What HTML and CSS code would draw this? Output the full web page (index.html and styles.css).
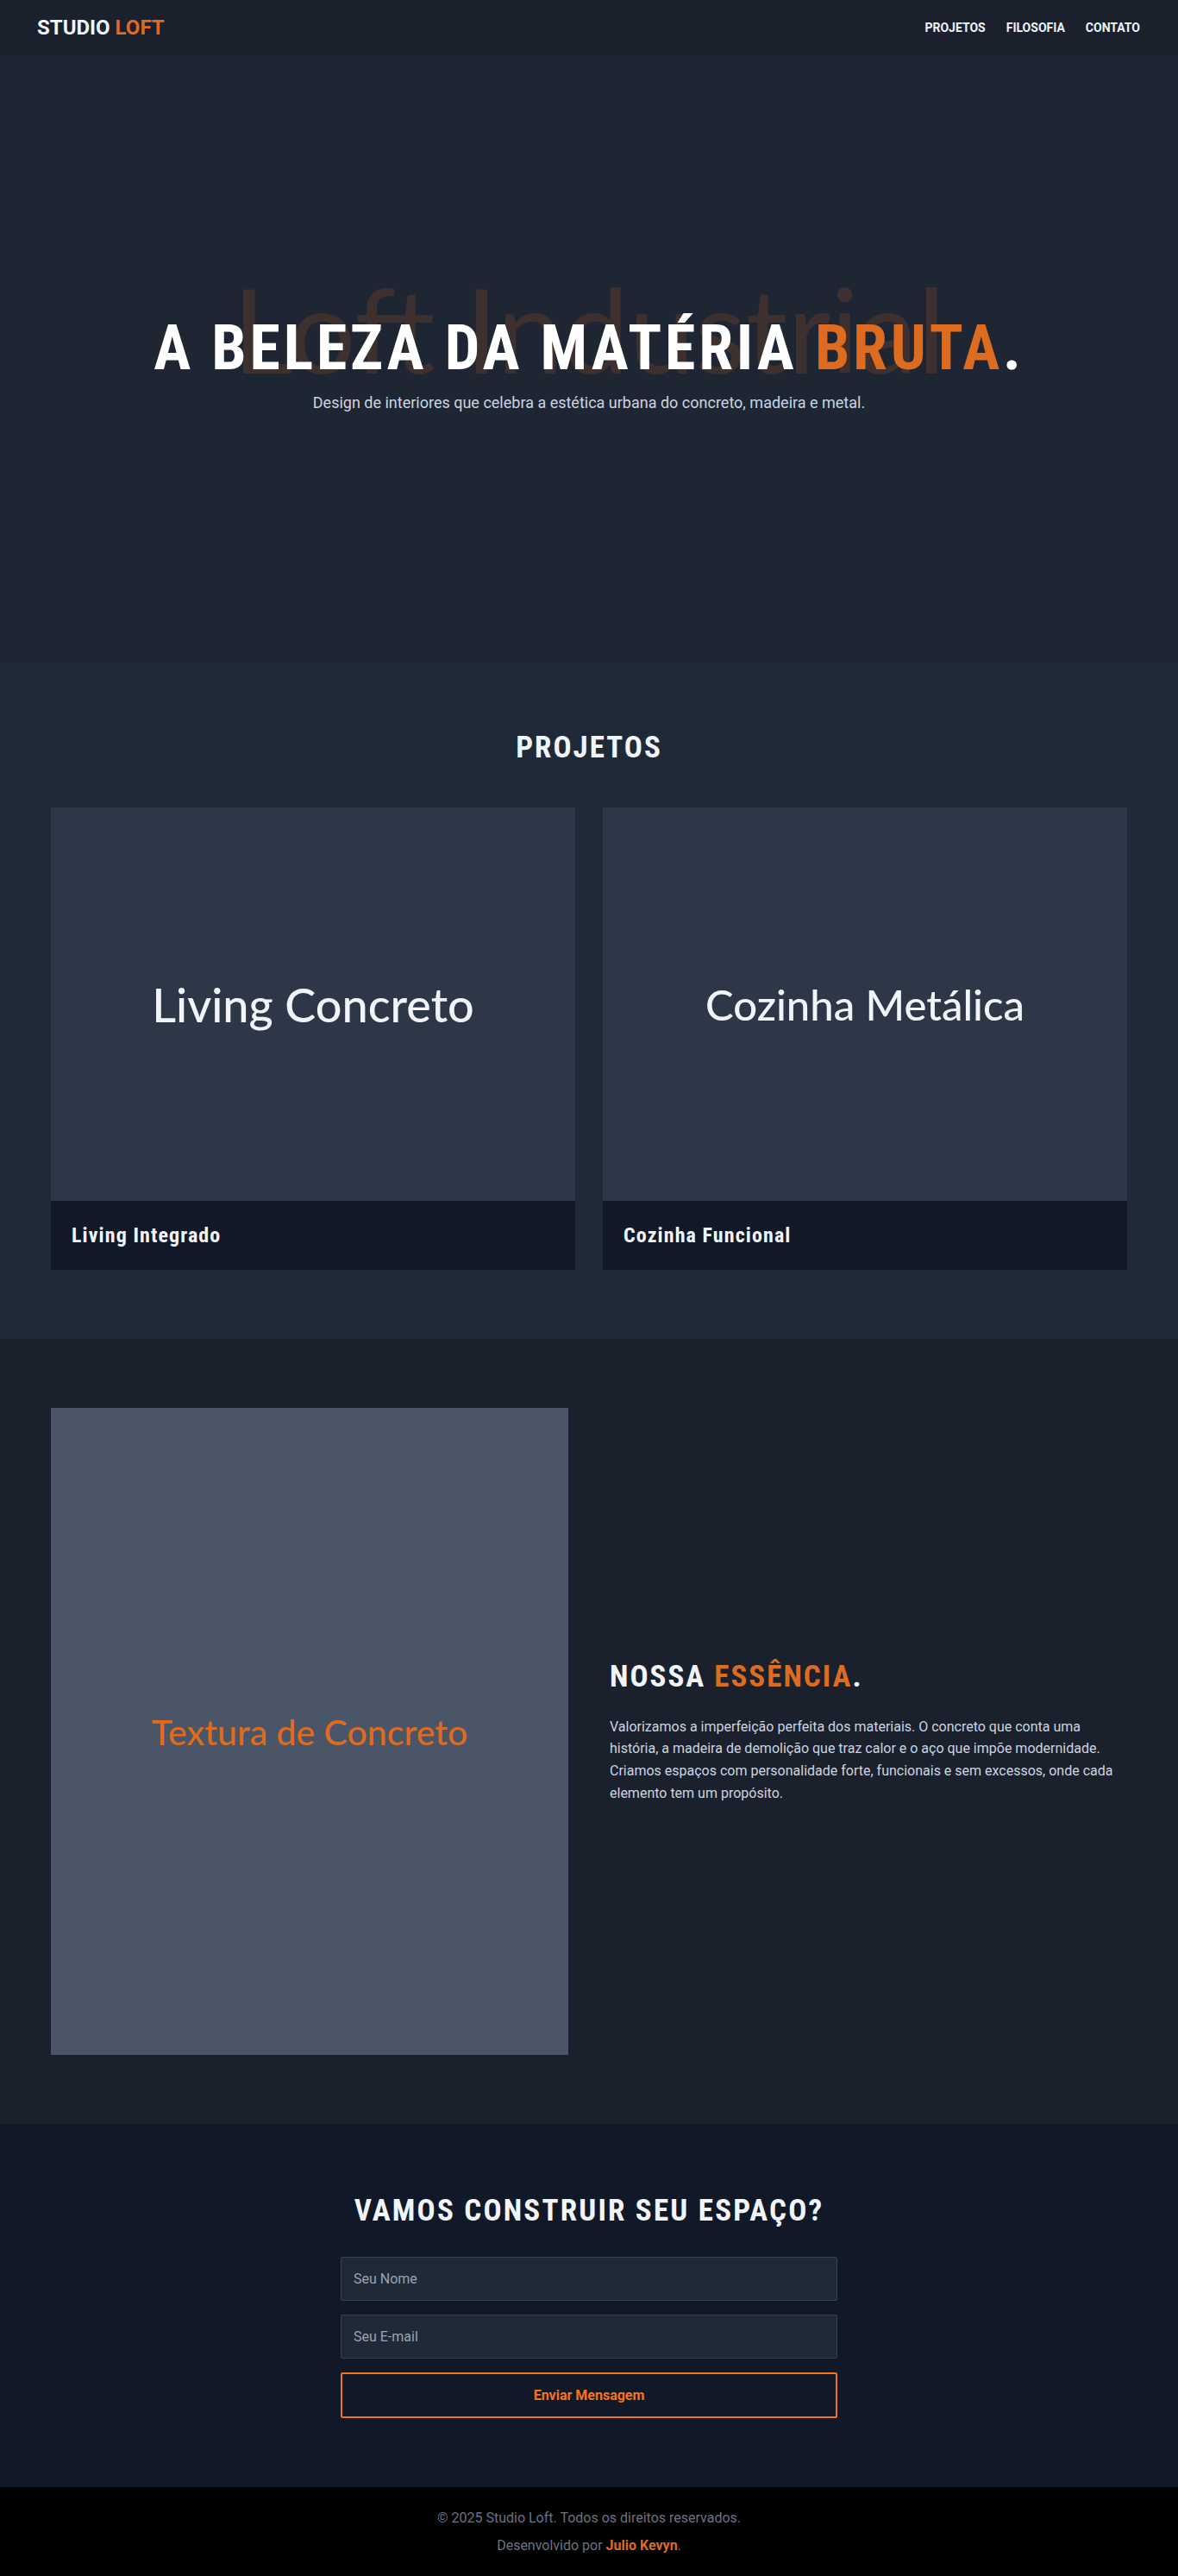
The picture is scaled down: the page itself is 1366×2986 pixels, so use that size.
FILE: index.html
```html
<!DOCTYPE html>
<html lang="pt-BR">
<head>
<meta charset="utf-8">
<title>Studio Loft</title>
<link rel="stylesheet" href="styles.css">
</head>
<body>
<header class="site-header">
  <div class="logo">STUDIO <span class="accent">LOFT</span></div>
  <nav class="nav">
    <a href="#projetos">PROJETOS</a>
    <a href="#filosofia">FILOSOFIA</a>
    <a href="#contato">CONTATO</a>
  </nav>
</header>

<section class="hero">
  <div class="hero-watermark" aria-hidden="true">Loft Industrial</div>
  <div class="hero-content">
    <h1 class="hero-title">A BELEZA DA MATÉRIA <span class="accent">BRUTA</span>.</h1>
    <p class="hero-sub">Design de interiores que celebra a estética urbana do concreto, madeira e metal.</p>
  </div>
</section>

<section class="projects" id="projetos">
  <div class="container">
    <h2 class="section-title">PROJETOS</h2>
    <div class="project-grid">
      <article class="card">
        <div class="card-media"><span>Living Concreto</span></div>
        <div class="card-caption"><h3>Living Integrado</h3></div>
      </article>
      <article class="card">
        <div class="card-media"><span class="media-label-sm">Cozinha Metálica</span></div>
        <div class="card-caption"><h3>Cozinha Funcional</h3></div>
      </article>
    </div>
  </div>
</section>

<section class="essence" id="filosofia">
  <div class="container essence-grid">
    <div class="essence-media"><span>Textura de Concreto</span></div>
    <div class="essence-text">
      <h2 class="section-title left">NOSSA <span class="accent">ESSÊNCIA</span>.</h2>
      <p>Valorizamos a imperfeição perfeita dos materiais. O concreto que conta uma história, a madeira de demolição que traz calor e o aço que impõe modernidade. Criamos espaços com personalidade forte, funcionais e sem excessos, onde cada elemento tem um propósito.</p>
    </div>
  </div>
</section>

<section class="contact" id="contato">
  <h2 class="section-title contact-title">VAMOS CONSTRUIR SEU ESPAÇO?</h2>
  <form class="contact-form">
    <input type="text" placeholder="Seu Nome">
    <input type="email" placeholder="Seu E-mail">
    <button type="button">Enviar Mensagem</button>
  </form>
</section>

<footer class="site-footer">
  <p>© 2025 Studio Loft. Todos os direitos reservados.</p>
  <p>Desenvolvido por <strong class="accent">Julio Kevyn</strong>.</p>
</footer>
</body>
</html>
```

FILE: styles.css
```css
* { box-sizing: border-box; }

html, body { margin: 0; padding: 0; }

body {
  font-family: Roboto, "Liberation Sans", sans-serif;
  background: #1a202c;
  color: #e2e8f0;
}

.accent { color: #dd6b20; }

.site-header {
  height: 64px;
  background: #1a202c;
  display: flex;
  align-items: center;
  justify-content: space-between;
  padding: 0 44px 0 43px;
}

.logo {
  font-family: Roboto, sans-serif;
  font-weight: 700;
  font-size: 24px;
  color: #f1f5f9;
}

.nav { display: flex; gap: 24px; }

.nav a {
  font-family: Roboto, sans-serif;
  font-weight: 700;
  font-size: 14px;
  color: #f1f5f9;
  text-decoration: none;
}

.hero {
  position: relative;
  height: 704px;
  background: #1e2533;
  display: flex;
  align-items: center;
  justify-content: center;
  overflow: hidden;
}

.hero-watermark {
  position: absolute;
  left: 50%;
  top: 50%;
  transform: translate(-50%, calc(-50% - 36px));
  font-family: Lato, sans-serif;
  font-size: 10vw;
  line-height: 1;
  white-space: nowrap;
  color: rgba(221, 107, 32, 0.16);
  pointer-events: none;
}

.hero-content {
  position: relative;
  text-align: center;
  padding-top: 14px;
}

.hero-title {
  margin: 0 0 10px;
  font-family: "Roboto Condensed", "DejaVu Sans Condensed", sans-serif;
  font-weight: 700;
  font-size: 72px;
  line-height: 1.1;
  letter-spacing: 3.8px;
  color: #ffffff;
}

.hero-sub {
  margin: 0;
  font-size: 18px;
  line-height: 1.6;
  color: #cbd5e1;
}

.container {
  max-width: 1280px;
  margin: 0 auto;
  padding: 0 16px;
}

.section-title {
  margin: 0 0 48px;
  font-family: "Roboto Condensed", "DejaVu Sans Condensed", sans-serif;
  font-weight: 700;
  font-size: 35px;
  line-height: 1.2;
  letter-spacing: 2px;
  text-align: center;
  color: #f1f5f9;
}

.section-title.left { text-align: left; margin-bottom: 24px; }

.projects {
  background: #1f2937;
  padding: 78px 0 80px;
}

.project-grid {
  display: grid;
  grid-template-columns: 1fr 1fr;
  gap: 32px;
}

.card { background: #111827; }

.card-media {
  aspect-ratio: 4 / 3;
  background: #2d3748;
  display: flex;
  align-items: center;
  justify-content: center;
}

.card-media span {
  font-family: Lato, sans-serif;
  font-weight: 500;
  font-size: 54px;
  color: #f1f5f9;
}

.card-media .media-label-sm { font-size: 49px; }

.card-caption { padding: 24px; }

.card-caption h3 {
  margin: 0;
  font-family: "Roboto Condensed", "DejaVu Sans Condensed", sans-serif;
  font-weight: 700;
  font-size: 24px;
  line-height: 32px;
  letter-spacing: 1.1px;
  color: #f1f5f9;
}

.essence {
  background: #1a202c;
  padding: 80px 0;
}

.essence-grid {
  display: grid;
  grid-template-columns: 1fr 1fr;
  gap: 48px;
  align-items: center;
}

.essence-media {
  aspect-ratio: 4 / 5;
  background: #4a5568;
  display: flex;
  align-items: center;
  justify-content: center;
}

.essence-media span {
  font-family: Lato, sans-serif;
  font-weight: 500;
  font-size: 41px;
  color: #dd6b20;
}

.essence-text p {
  margin: 0;
  font-size: 16px;
  line-height: 1.6;
  color: #cbd5e1;
}

.contact {
  background: #111827;
  padding: 80px 16px 80px;
}

.contact-title { margin-bottom: 32px; letter-spacing: 2.2px; }

.contact-form {
  max-width: 576px;
  margin: 0 auto;
  display: flex;
  flex-direction: column;
  gap: 16px;
}

.contact-form input {
  font-family: Roboto, sans-serif;
  font-size: 16px;
  padding: 15px 14px;
  background: #1f2937;
  border: 1px solid #374151;
  border-radius: 2px;
  color: #e2e8f0;
  outline: none;
}

.contact-form input::placeholder { color: #9ca3af; }

.contact-form button {
  font-family: Roboto, sans-serif;
  font-weight: 700;
  font-size: 16px;
  padding: 15px 14px;
  background: transparent;
  border: 2px solid #f97316;
  border-radius: 2px;
  color: #f97316;
  cursor: pointer;
}

.site-footer {
  background: #000000;
  padding: 24px;
  text-align: center;
  color: #6b7280;
  font-size: 16px;
  line-height: 24px;
}

.site-footer p { margin: 0; }
.site-footer p + p { margin-top: 8px; }
```
